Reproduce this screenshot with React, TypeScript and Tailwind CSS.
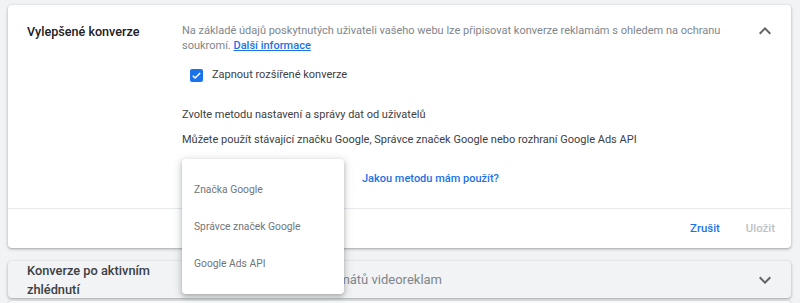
import React from "react";

function ChevronUp() {
  return (
    <svg width="24" height="24" viewBox="0 0 24 24" fill="#5f6368">
      <path d="M7.41 15.41 12 10.83l4.59 4.58L18 14l-6-6-6 6z" />
    </svg>
  );
}
function ChevronDown() {
  return (
    <svg width="24" height="24" viewBox="0 0 24 24" fill="#5f6368">
      <path d="M7.41 8.59 12 13.17l4.59-4.58L18 10l-6 6-6-6z" />
    </svg>
  );
}

export default function App() {
  return (
    <div
      className="w-[800px] h-[303px] overflow-hidden bg-[#f1f3f4] px-2 pt-[5px] relative"
      style={{ fontFamily: "Roboto, 'Noto Sans', sans-serif" }}
    >
      {/* Card 1 */}
      <div className="relative bg-white rounded-[4px] shadow-[0_1px_2px_rgba(60,64,67,0.3),0_1px_3px_1px_rgba(60,64,67,0.12)] w-[783px] h-[243px] flex flex-col">
        <div className="flex pl-[19px] pt-[18px] flex-1">
          <div className="w-[155px] mt-[1px] text-[12.6px] leading-[16px] font-medium text-[#202124]">
            Vylepšené konverze
          </div>
          <div className="flex-1 flex flex-col">
            <div className="flex">
              <div className="w-[560px] text-[11px] leading-[15px] text-[#80868b]">
                Na základě údajů poskytnutých uživateli vašeho webu lze připisovat konverze reklamám s ohledem na ochranu soukromí.{" "}
                <span className="text-[#1a73e8] underline font-medium">Další informace</span>
              </div>
              <div className="ml-auto mr-[14px] -mt-[4px]">
                <ChevronUp />
              </div>
            </div>
            <div className="flex items-center mt-[15px] ml-[8px] h-[14px]">
              <div className="w-[13px] h-[13px] rounded-[2px] bg-[#1a73e8] flex items-center justify-center">
                <svg width="11" height="11" viewBox="0 0 24 24" fill="none" stroke="white" strokeWidth="3.4">
                  <path d="M4 12.5l5 5L20 6.5" />
                </svg>
              </div>
              <span className="ml-[9px] text-[11px] text-[#3c4043]">Zapnout rozšířené konverze</span>
            </div>
            <div className="mt-[25px] text-[11px] leading-[15px] text-[#3c4043]">
              Zvolte metodu nastavení a správy dat od uživatelů
            </div>
            <div className="mt-[10px] text-[11px] leading-[15px] text-[#3c4043]">
              Můžete použít stávající značku Google, Správce značek Google nebo rozhraní Google Ads API
            </div>
            <div className="mt-[24px] ml-[180px] text-[11px] leading-[15px] font-medium text-[#1a73e8]">
              Jakou metodu mám použít?
            </div>
          </div>
        </div>
        <div className="h-px bg-[#e8eaed]" />
        <div className="h-[39px] flex items-center justify-end pr-[16px] gap-[26px] text-[11.4px] font-medium">
          <span className="text-[#1a73e8]">Zrušit</span>
          <span className="text-[#bdc1c6]">Uložit</span>
        </div>
      </div>

      {/* Card 2 */}
      <div className="mt-[13px] bg-[#f1f3f4] rounded-[4px] shadow-[0_1px_2px_rgba(60,64,67,0.3),0_1px_3px_1px_rgba(60,64,67,0.12)] w-[783px] h-[37px] flex pl-[19px]">
        <div className="w-[155px] text-[12.8px] leading-[19px] font-medium text-[#3c4043]">
          Konverze po aktivním zhlédnutí
        </div>
        <div className="flex-1 pt-[9px] pl-[11px] text-[13px] leading-[20px] text-[#80868b]">
          Konverze ze zhlédnutí formátů videoreklam
        </div>
        <div className="mr-[14px] pt-[7px]">
          <ChevronDown />
        </div>
      </div>

      {/* Card 3 */}
      <div className="mt-[3px] bg-[#f8f9fa] rounded-[4px] shadow-[0_1px_2px_rgba(60,64,67,0.3),0_1px_3px_1px_rgba(60,64,67,0.12)] w-[783px] h-[30px]" />

      {/* Dropdown menu */}
      <div className="absolute left-[182px] top-[159px] w-[162px] h-[135px] bg-white rounded-[4px] shadow-[0_2px_4px_rgba(60,64,67,0.3),0_2px_8px_2px_rgba(60,64,67,0.15)] flex flex-col pt-[22px] pl-[12px] text-[10.3px] text-[#70757a]">
        <div className="h-[37px] leading-[18px]">Značka Google</div>
        <div className="h-[37px] leading-[18px]">Správce značek Google</div>
        <div className="h-[37px] leading-[18px]">Google Ads API</div>
      </div>
    </div>
  );
}
